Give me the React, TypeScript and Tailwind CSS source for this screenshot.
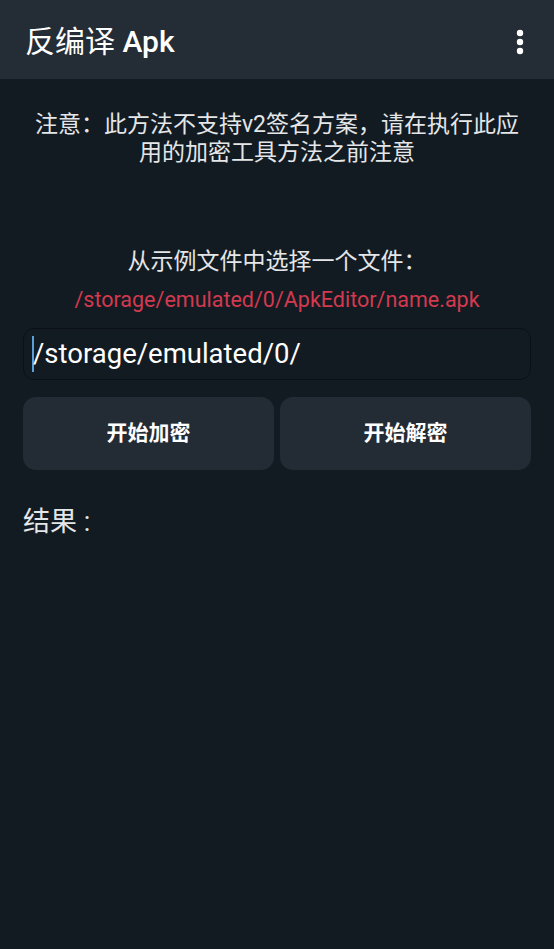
import React from 'react';

const FONT = { fontFamily: 'Roboto, "Noto Sans CJK SC", sans-serif' };

function MoreIcon() {
  return (
    <svg width="8" height="26" viewBox="0 0 8 26" aria-hidden>
      <circle cx="4" cy="4" r="3.2" fill="#ffffff" />
      <circle cx="4" cy="13" r="3.2" fill="#ffffff" />
      <circle cx="4" cy="22" r="3.2" fill="#ffffff" />
    </svg>
  );
}

export default function App() {
  return (
    <div className="min-h-screen w-full bg-[#131b22]" style={FONT}>
      {/* toolbar */}
      <div className="flex h-[79px] items-center justify-between bg-[#242c35] pl-[25px] pr-[30px] pt-[4px]">
        <h1 className="text-[30px] leading-none text-white">
          <span className="font-normal">反编译 </span>
          <span className="font-medium">Apk</span>
        </h1>
        <MoreIcon />
      </div>

      <div className="px-[23px]">
        <p className="mt-[32px] text-center text-[23px] leading-[28px] text-[#e4e6e8]">
          注意：此方法不支持v2签名方案，请在执行此应
          <br />
          用的加密工具方法之前注意
        </p>

        <p className="mt-[81px] text-center text-[23px] leading-[28px] text-[#e4e6e8]">从示例文件中选择一个文件：</p>
        <p className="mt-[11px] text-center text-[21.5px] leading-[26px] text-[#d3394f]">
          /storage/emulated/0/ApkEditor/name.apk
        </p>

        <div className="mt-[15px] flex h-[52px] items-center rounded-[11px] border border-[#0a1015] pl-[8px]">
          <span className="h-[36px] w-[2px] bg-[#5b9fd9]" />
          <span className="-ml-[1px] text-[27.5px] leading-none text-white">/storage/emulated/0/</span>
        </div>

        <div className="mt-[17px] grid grid-cols-2 gap-[6px]">
          <button className="flex h-[73px] items-center justify-center rounded-[13px] bg-[#232b34] text-[21px] font-bold text-white">
            开始加密
          </button>
          <button className="flex h-[73px] items-center justify-center rounded-[13px] bg-[#232b34] text-[21px] font-bold text-white">
            开始解密
          </button>
        </div>

        <p className="mt-[36px] text-[27px] leading-[32px] text-[#e4e6e8]">结果 :</p>
      </div>
    </div>
  );
}
